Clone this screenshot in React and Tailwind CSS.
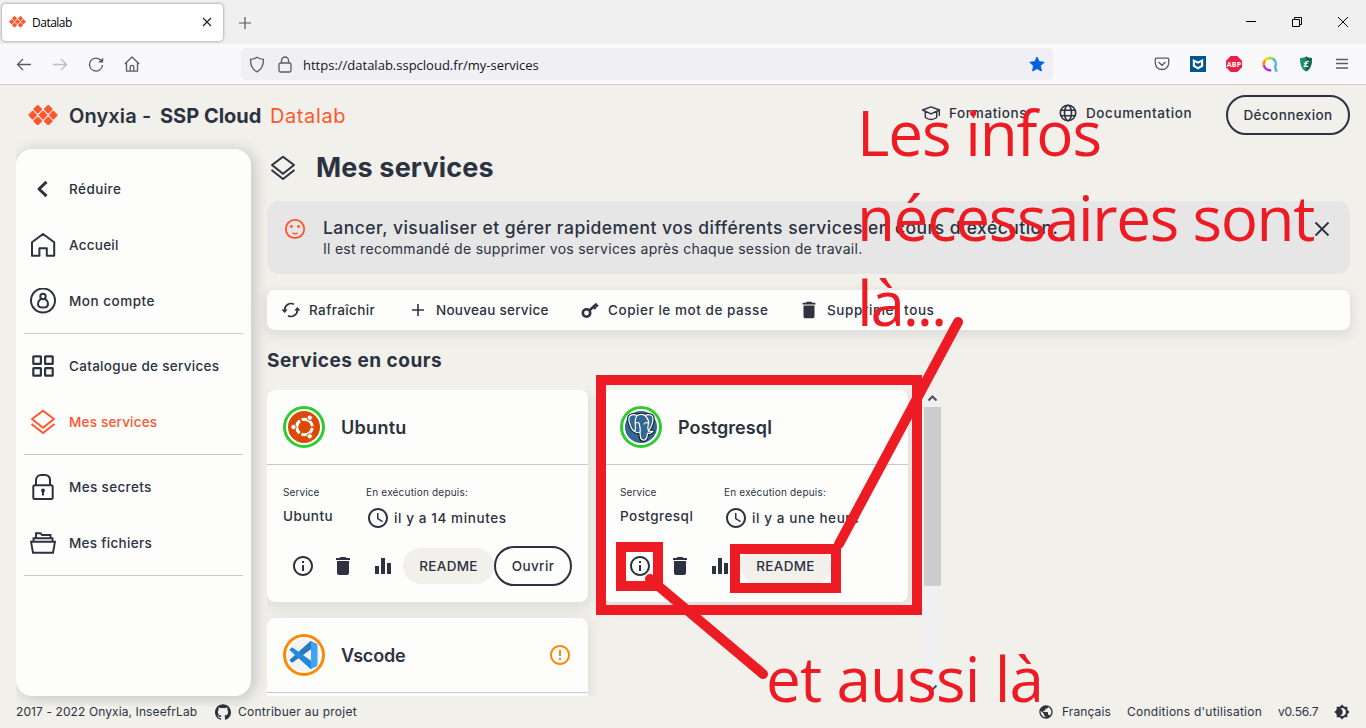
import React from 'react';
import {
  MdInfoOutline,
  MdDelete,
  MdEqualizer,
  MdAccessTime,
  MdErrorOutline,
  MdPublic,
  MdBrightness4,
} from 'react-icons/md';
import { SiGithub } from 'react-icons/si';

function OnyxiaLogo({ className }) {
  const tiles = [
    [9.6, 4.2], [20, 4.2],
    [4.6, 10], [14.8, 10], [25, 10],
    [9.6, 15.8], [20, 15.8],
  ];
  return (
    <svg viewBox="0 0 29.6 20" className={className} fill="#ff562c">
      {tiles.map(([x, y]) => (
        <rect key={`${x}-${y}`} x={x - 3.3} y={y - 3.3} width="6.6" height="6.6" rx="1" transform={`rotate(45 ${x} ${y})`} />
      ))}
    </svg>
  );
}

function LayersIcon({ className }) {
  return (
    <svg viewBox="0 0 26 26" className={className} fill="none" stroke="currentColor" strokeWidth="2" strokeLinejoin="round">
      <path d="M13 1.800 24 10 13 18.800 2 10Z" />
      <path d="m1.500 15 11.500 9L24.500 15" />
    </svg>
  );
}

function Line({ children, size = 26, width = 2, className = '' }) {
  return (
    <svg width={size} height={size} viewBox="0 0 26 26" fill="none" stroke="currentColor" strokeWidth={width} strokeLinejoin="round" className={className}>
      {children}
    </svg>
  );
}

const ChevronIcon = () => (
  <Line width={3} className="-translate-x-px"><path d="m17.500 5.800-7.500 7.200 7.500 7.200" /></Line>
);
const HomeIcon = () => (
  <Line><path d="M2 10.200 13 2l11.200 8.200v13.600h-7.400v-7.600H9.400v7.600H2Z" /></Line>
);
const AccountIcon = () => (
  <Line>
    <circle cx="13" cy="12.500" r="12" />
    <circle cx="13" cy="8.500" r="2.700" />
    <path d="M11 10.600C9.200 12.200 8 14 8 16c0 2.200 2 3.600 5 3.600s5-1.400 5-3.600c0-2-1.200-3.800-3-5.400" />
  </Line>
);
const CatalogIcon = () => (
  <Line width={2.2}>
    <rect x="3.300" y="3.300" width="7.600" height="7.600" rx="0.500" />
    <rect x="15.100" y="3.300" width="7.600" height="7.600" rx="0.500" />
    <rect x="3.300" y="15.100" width="7.600" height="7.600" rx="0.500" />
    <rect x="15.100" y="15.100" width="7.600" height="7.600" rx="0.500" />
  </Line>
);
const LockIcon = () => (
  <Line>
    <rect x="3.300" y="11.300" width="19.400" height="13.700" rx="1.500" />
    <path d="M6 11.500V6.500C6 3 8.500 1 11 1h4c3 0 5 2 5 5.500v5" />
    <circle cx="13" cy="16.500" r="1.200" fill="currentColor" strokeWidth="1.500" />
    <path d="M13 17v4.500" />
  </Line>
);
const FilesIcon = () => (
  <Line width={1.900}>
    <path d="M1 11.700h24l-2 11H3Z" strokeLinejoin="miter" />
    <path d="M3.500 11.500V8.300h19v3.200M6 8V3.200h4.500L12 5h8.500v3" strokeLinejoin="miter" />
  </Line>
);

const menu = [
  [
    { label: 'Réduire', icon: ChevronIcon, text: 'tracking-[0.45px]' },
    { label: 'Accueil', icon: HomeIcon, text: 'tracking-[0.250px]' },
    { label: 'Mon compte', icon: AccountIcon, text: 'tracking-[0.5px]' },
  ],
  [
    { label: 'Catalogue de services', icon: CatalogIcon, text: 'tracking-[0.3px]' },
    { label: 'Mes services', icon: () => <LayersIcon className="size-[26px]" />, text: 'tracking-[0.2px]', active: true },
  ],
  [
    { label: 'Mes secrets', icon: LockIcon, text: 'tracking-[0.35px]' },
    { label: 'Mes fichiers', icon: FilesIcon, text: 'tracking-[0.3px]' },
  ],
];

function Sidebar() {
  return (
    <nav className="w-[235px] shrink-0 [clip-path:inset(-12px_-16px_-10px_0)]">
      <div className="h-full rounded-2xl bg-[#fdfdfc] px-2 pt-3 shadow-[3px_2px_14px_1px_rgba(44,50,63,0.22)]">
        {menu.map((group, i) => (
          <div key={i}>
            {group.map(({ label, icon: Icon, text, active }) => (
              <div key={label} className={`flex h-14 items-center gap-[13px] pl-1.5 ${active ? 'text-[#ff562c]' : ''}`}>
                <Icon />
                <span className={`text-[13.5px] font-medium whitespace-nowrap ${text}`}>{label}</span>
              </div>
            ))}
            <div className="my-1 h-px bg-[#c9c9c8]" />
          </div>
        ))}
      </div>
    </nav>
  );
}

function BrowserChrome() {
  return (
    <div className="shrink-0 font-['Open_Sans',sans-serif]">
      <div className="flex h-11 items-center bg-[#f0f0f0]">
        <div className="ml-[2px] flex h-[37px] w-[221px] items-center rounded bg-white pl-[7px] shadow-[0_0_3px_rgba(0,0,0,0.5)]">
          <OnyxiaLogo className="mr-[6px] w-[17px]" />
          <span className="grow pt-0.5 text-[12px] tracking-[-0.5px] text-black">Datalab</span>
          <svg width="10" height="10" viewBox="0 0 10 10" stroke="#222" strokeWidth="1.200" className="mr-[11px]"><path d="m1 1 8 8M9 1 1 9" /></svg>
        </div>
        <svg width="12" height="12" viewBox="0 0 12 12" stroke="#55555f" strokeWidth="1.200" className="mt-px ml-4"><path d="M6 0v12M0 6h12" /></svg>
        <div className="ml-auto flex items-center gap-9 pr-[18px] text-black">
          <svg width="10" height="10" viewBox="0 0 10 10" stroke="currentColor"><path d="M0 4.500h10" /></svg>
          <svg width="10" height="10" viewBox="0 0 10 10" stroke="currentColor" fill="none"><path d="M.5 2.500h7v7h-7ZM2.500 2.500v-2h7v7h-2" /></svg>
          <svg width="10" height="10" viewBox="0 0 10 10" stroke="currentColor"><path d="m0 0 10 10M10 0 0 10" /></svg>
        </div>
      </div>
      <div className="flex h-[41px] items-center border-b border-[#cccccf] bg-[#f9f9fb] pl-4 text-[#5b5b66]">
        <svg width="16" height="16" viewBox="0 0 16 16" fill="none" stroke="currentColor" strokeWidth="1.300"><path d="M15 8.500H1.500M7 3 1.500 8.500 7 14" /></svg>
        <svg width="16" height="16" viewBox="0 0 16 16" fill="none" stroke="#bcbcc1" strokeWidth="1.300" className="ml-5"><path d="M1 8.500h13.500M9 3 14.500 8.500 9 14" /></svg>
        <svg width="16" height="16" viewBox="0 0 16 16" fill="none" stroke="currentColor" strokeWidth="1.300" className="ml-5"><path d="M13.300 4.800a6.500 6.500 0 1 0 1.200 4.200" /><path d="M15.200 1.500v5H10Z" fill="currentColor" stroke="none" /></svg>
        <svg width="16" height="16" viewBox="0 0 16 16" fill="none" stroke="currentColor" strokeWidth="1.300" strokeLinejoin="round" className="ml-5"><path d="M.8 8 8 1l7.200 7M2.500 6.500v8.700h11V6.500M6.200 15v-3.800a1.800 1.800 0 0 1 3.600 0V15" /></svg>
        <div className="ml-[101px] flex h-8 w-[812px] items-center rounded bg-[#f0f0f4] pl-2">
          <svg width="16" height="17" viewBox="0 0 16 17" fill="none" stroke="currentColor" strokeWidth="1.300"><path d="M8 1.200c2 1.400 4 2 6.500 2.200C14.500 9 12.500 13.500 8 15.800 3.500 13.500 1.500 9 1.500 3.400 4 3.200 6 2.600 8 1.200Z" /></svg>
          <svg width="14" height="17" viewBox="0 0 14 17" fill="none" stroke="currentColor" strokeWidth="1.300" className="ml-[13px]"><rect x="1" y="7" width="12" height="9" rx="1.500" /><path d="M3.500 7V4.500a3.500 3.500 0 0 1 7 0V7" /></svg>
          <span className="ml-[11px] grow pt-[3px] text-[13px] text-[#15141a]">https://datalab.sspcloud.fr/my-services</span>
          <svg width="16" height="16" viewBox="0 0 16 16" fill="#0061e0" className="mr-2"><path stroke="#0061e0" strokeLinejoin="round" d="m8 1 2.100 4.700 5.100.600-3.800 3.500 1 5.200L8 12.500 3.600 15l1-5.200L.8 6.300l5.100-.6Z" /></svg>
        </div>
        <div className="ml-auto flex items-center gap-5 pr-4">
          <svg width="16" height="16" viewBox="0 0 16 16" fill="none" stroke="currentColor" strokeWidth="1.300"><path d="M2.300 2.200h11.400c.7 0 1 .4 1 1V7c0 4-3 6.500-6.700 6.500S1.300 11 1.300 7V3.200c0-.6.300-1 1-1ZM4.500 6 8 9.300 11.500 6" /></svg>
          <svg width="16" height="16" viewBox="0 0 16 16"><path fill="#01568f" d="M0 0h16v16H0Z" /><path fill="#fff" d="m2.800 3 5.200 2.500L13.200 3v7.500L8 13.500l-5.200-3Z" /><path fill="#01568f" d="m5 6.200 3 1.500 3-1.500v3L8 11 5 9.200Z" /></svg>
          <svg width="16" height="16" viewBox="0 0 16 16"><path fill="#ed1e45" d="M4.700 0h6.600L16 4.700v6.600L11.300 16H4.700L0 11.300V4.700Z" /><text x="8" y="10.800" textAnchor="middle" fontSize="7.200" fontWeight="700" fill="#fff">ABP</text></svg>
          <svg width="16" height="17" viewBox="0 0 16.500 17" fill="none" strokeWidth="2.500"><path d="M2 10a6.300 6.300 0 0 1 1.500-6" stroke="#ff8a00" /><path d="M3 4.500A6.300 6.300 0 0 1 8 1.800" stroke="#fbd500" /><path d="M7 1.900a6.300 6.300 0 0 1 5.500 1.600" stroke="#8ee04a" /><path d="M11.500 2.800A6.300 6.300 0 0 1 13.500 11l1.500 5" stroke="#44b4f5" /><path d="M2 9.500a6.300 6.300 0 0 0 7.500 4.800" stroke="#b32ee0" /></svg>
          <svg width="16" height="16" viewBox="0 0 16 16"><path fill="#1f8f74" d="M8 .5c2 1 4 1.500 6 1.500 0 6-1 11-6 13.500C3 13 2 8 2 2c2 0 4-.5 6-1.500Z" /><path fill="#12684f" d="M8 .5c2 1 4 1.500 6 1.500 0 6-1 11-6 13.500Z" /><text x="8" y="11" textAnchor="middle" fontSize="9" fontWeight="700" fontStyle="italic" fill="#fff">£</text></svg>
          <svg width="16" height="16" viewBox="0 0 16 16" stroke="currentColor" strokeWidth="1.300"><path d="M2 3.500h12M2 7.500h12M2 12h12" /></svg>
        </div>
      </div>
    </div>
  );
}

function Header() {
  return (
    <header className="flex h-16 shrink-0 items-center pr-4 pb-1 pl-7">
      <OnyxiaLogo className="w-[30px]" />
      <div className="ml-[11px] flex pt-px text-[20px] whitespace-nowrap">
        <span className="w-[91px] font-semibold tracking-[0.1px]">Onyxia -</span>
        <span className="w-[110px] font-bold">SSP Cloud</span>
        <span className="tracking-[0.6px] text-[#ff562c]">Datalab</span>
      </div>
      <div className="ml-auto flex items-center text-[13.5px] font-medium whitespace-nowrap">
        <svg width="20" height="18" viewBox="0 0 20 18" fill="none" stroke="currentColor" strokeWidth="1.400" strokeLinejoin="round" className="-mt-1 mr-[7px] -translate-x-px"><path d="M1.500 6 10 2.800 18.500 6 10 9.800ZM4.300 7.500v6q5.700 4 11.400 0v-6M18.300 6v6" /></svg>
        <span className="-mt-1 w-[110px] tracking-[0.6px]">Formations</span>
        <svg width="18" height="18" viewBox="0 0 18 18" fill="none" stroke="currentColor" strokeWidth="1.600" className="-mt-1 mr-[9px]"><circle cx="9" cy="9" r="7.700" /><ellipse cx="9" cy="9" rx="3.500" ry="7.700" /><path d="M2 6.200h14M2 11.800h14" /></svg>
        <span className="-mt-1 w-[140px] tracking-[0.6px]">Documentation</span>
        <button className="h-10 w-[124px] rounded-full border-2 border-[#2c323f] text-[13.500px] font-medium tracking-[0.4px]">Déconnexion</button>
      </div>
    </header>
  );
}

const RefreshIcon = () => (
  <svg width="24" height="24" viewBox="0 0 24 24" fill="none" stroke="currentColor" strokeWidth="1.700" className="shrink-0">
    <path d="M5.600 12A6.400 6.400 0 0 1 15 6.300M18.400 12A6.400 6.400 0 0 1 9 17.700" />
    <path d="M2.500 11.500h6.200l-3.100 3.500ZM21.500 12.500h-6.200L18.400 9Z" fill="currentColor" stroke="none" />
  </svg>
);
const PlusIcon = () => (
  <svg width="24" height="24" viewBox="0 0 24 24" stroke="currentColor" strokeWidth="1.600" className="shrink-0"><path d="M12 6v12M6 12h12" /></svg>
);
const KeyIcon = () => (
  <svg width="24" height="24" viewBox="0 0 24 24" fill="none" stroke="currentColor" strokeWidth="2.600" className="shrink-0"><circle cx="8.500" cy="15" r="3.700" /><path d="m11.300 12.500 7.500-6.700M15.500 8.500l2.200 2.300M17.800 6.500l2 2.200" /></svg>
);

const actions = [
  { label: 'Rafraîchir', icon: RefreshIcon, width: 'w-[97px]', text: 'tracking-[0.4px]' },
  { label: 'Nouveau service', icon: PlusIcon, width: 'w-[142px]', text: 'tracking-[0.250px]' },
  { label: 'Copier le mot de passe', icon: KeyIcon, width: 'w-[189px]', text: 'tracking-[0.55px]' },
  { label: 'Supprimer tous', icon: () => <MdDelete size={22} className="mx-px shrink-0" />, width: 'w-[138px]', text: 'tracking-[0.6px]' },
];

function UbuntuLogo() {
  return (
    <svg viewBox="0 0 32 32" className="size-8" fill="none">
      <circle cx="16" cy="16" r="16" fill="#d94a05" />
      <circle cx="16.500" cy="16" r="7.800" stroke="#fff" strokeWidth="3" strokeDasharray="14.340 2" strokeDashoffset="-1" />
      {[[5.500, 16], [21.700, 6.700], [21.700, 25.300]].map(([x, y]) => (
        <circle key={`${x}${y}`} cx={x} cy={y} r="2.700" fill="#fff" stroke="#d94a05" strokeWidth="1" />
      ))}
    </svg>
  );
}

const elephant =
  'M10 20C7 21 3.500 11 3.800 7.500 4 3.500 9 3 12 4.500c3-1.300 6-1.300 8 0 4-1.800 8-.5 8 3 0 4-2 9-4.500 12.500 1.500.7 3 .5 4.500.2-1 2-4 2.500-5.500 2-.5 3 0 7-4 7-3 0-3.500-3-3.500-8-1 .5-3.500.7-4.500-.2';

function PostgresLogo() {
  return (
    <div className="flex size-8 items-center justify-center rounded-full bg-[#336791]">
      <svg viewBox="0 0 32 32" className="size-8" fill="none" stroke="#fff" strokeWidth="1.200" strokeLinejoin="round" strokeLinecap="round">
        <path d={elephant} stroke="#10202c" strokeWidth="3.400" />
        <path d={elephant} fill="#336791" />
        <path d="M12 4.500c-2 3-2 8-1.500 11 .3 2 .2 3-1 4.500M10.500 12c2-1 4-.5 4 1.500 0 3 1.500 4 .5 7.500M20 4.500c3 3 4.500 7 3 10.500-.5 1.500-.3 3 .5 5M22.800 12c-2-.8-3.500-.3-3.500 1" />
      </svg>
    </div>
  );
}

function VscodeLogo() {
  return (
    <svg viewBox="0 0 32 32" className="size-8">
      <circle cx="16" cy="16" r="16" fill="#f3f3f3" />
      <path fill="#2b78bd" d="M2 20.500 22.500 2 24 3v6.500L5 23.300q-.8.600-1.500 0l-1.500-1.300q-.6-.7 0-1.500Z" />
      <path fill="#2489d8" d="M2 11.500 22.500 30l1.500-1v-6.500L5 8.700q-.8-.6-1.500 0L2 10q-.6.700 0 1.500Z" />
      <path fill="#3fa4f3" d="m22.500 1.700 6 2.800q1 .6 1 1.700v19.600q0 1.100-1 1.700l-6 2.800q-.6.200-1-.2c.8.600 1.500.1 1.500-1V2.900c0-1.100-.7-1.600-1.500-1q.4-.5 1-.2Z" />
    </svg>
  );
}

function Card({ name, logo, ring, warning, size, since, nameWidth, titleText, open }) {
  return (
    <article className={`flex flex-col rounded-t-lg bg-[#fdfdfc] shadow-[0_4px_12px_2px_rgba(44,50,63,0.10)] ${size}`}>
      <div className="flex h-[75px] shrink-0 items-center border-b border-[#c9c9c8] px-4">
        <div className={`flex size-[42px] items-center justify-center rounded-full border-[3px] bg-white ${ring}`}>{logo}</div>
        <h3 className={`ml-4 grow text-[18px] font-semibold ${titleText}`}>{name}</h3>
        {warning && <MdErrorOutline size={24} className="text-[#ff8800]" />}
      </div>
      {since && (
        <>
          <div className="flex h-[81px] gap-8 px-4 pt-5 whitespace-nowrap">
            <div className={nameWidth}>
              <div className="text-[10px] leading-[14px] tracking-[0.1px]">Service</div>
              <div className="mt-2 text-[13.500px] leading-[18px] font-medium tracking-[0.45px]">{name}</div>
            </div>
            <div>
              <div className="text-[10px] leading-[14px] tracking-[0.2px]">En exécution depuis:</div>
              <div className="mt-[7px] flex items-center gap-1 text-[13.500px] font-medium tracking-[0.6px]">
                <MdAccessTime size={24} />
                <span>{since}</span>
              </div>
            </div>
          </div>
          <div className="flex h-10 items-center px-4">
            <span className="flex w-10 justify-center"><MdInfoOutline size={24} /></span>
            <span className="flex w-10 justify-center"><MdDelete size={24} /></span>
            <span className="flex w-10 justify-center"><MdEqualizer size={24} /></span>
            <button className="h-9 w-[91px] rounded-full bg-[#f1f0eb] text-[13.500px] font-medium tracking-[0.3px]">README</button>
            {open && <button className="h-10 w-[78px] rounded-full border-2 border-[#2c323f] text-[13.500px] font-medium tracking-[0.4px]">Ouvrir</button>}
          </div>
        </>
      )}
    </article>
  );
}

function Main() {
  return (
    <main className="flex min-w-0 grow flex-col">
      <div className="flex h-[38px] items-center pl-[3px]">
        <LayersIcon className="size-[26px]" />
        <h1 className="ml-5 text-[27px] font-bold tracking-[0.15px]">Mes services</h1>
      </div>
      <div className="mt-[14px] flex h-[73px] rounded-xl bg-[#e6e6e6] pr-5 pl-4">
        <svg width="24" height="24" viewBox="0 0 24 24" fill="none" stroke="#ff562c" strokeWidth="1.800" className="mt-4"><circle cx="12" cy="12" r="9.200" /><path d="M9.500 16q2.500 1.300 5 0" strokeWidth="1.500" /><circle cx="8.500" cy="9.500" r="1.400" fill="#ff562c" stroke="none" /><circle cx="15.500" cy="9.500" r="1.400" fill="#ff562c" stroke="none" /></svg>
        <div className="mt-[15px] ml-4 grow whitespace-nowrap">
          <div className="text-[17.500px] leading-6 font-medium tracking-[0.47px]">Lancer, visualiser et gérer rapidement vos différents services en cours d'exécution.</div>
          <div className="text-[14px] leading-[18px] tracking-[0.28px]">Il est recommandé de supprimer vos services après chaque session de travail.</div>
        </div>
        <svg width="16" height="16" viewBox="0 0 16 16" stroke="currentColor" strokeWidth="1.800" className="mt-5"><path d="m1.500 1.500 13 13M14.500 1.500l-13 13" /></svg>
      </div>
      <div className="mt-4 flex h-10 items-center gap-[30px] rounded-lg bg-[#fdfdfc] pl-3 text-[13.500px] font-medium shadow-[0_4px_12px_2px_rgba(44,50,63,0.10)]">
        {actions.map(({ label, icon: Icon, width, text }) => (
          <div key={label} className={`flex items-center gap-1.5 whitespace-nowrap ${width}`}>
            <Icon />
            <span className={text}>{label}</span>
          </div>
        ))}
      </div>
      <h2 className="h-[60px] text-[19px] leading-[62px] font-bold tracking-[0.5px]">Services en cours</h2>
      <div className="flex h-[306px] w-[674px]">
        <div className="flex w-[657px] flex-wrap content-start gap-4 overflow-hidden">
          <Card name="Ubuntu" logo={<UbuntuLogo />} ring="border-[#2ecc31]" size="h-[212px] w-[321px] rounded-b-lg" nameWidth="w-[51px]" since="il y a 14 minutes" titleText="tracking-[0.3px]" open />
          <Card name="Postgresql" logo={<PostgresLogo />} ring="border-[#2ecc31]" size="h-[212px] w-[304px] rounded-b-lg" nameWidth="w-[72px]" since="il y a une heure" titleText="tracking-[0.1px]" />
          <Card name="Vscode" logo={<VscodeLogo />} ring="border-[#ff8800]" size="h-[78px] w-[321px]" titleText="tracking-[-0.150px] pt-px" warning />
        </div>
        <div className="flex w-[17px] flex-col items-center bg-[#f0f0f0] text-[#505050]">
          <svg width="17" height="17" viewBox="0 0 17 17" fill="none" stroke="currentColor" strokeWidth="2"><path d="m4.500 10.500 4-4 4 4" /></svg>
          <div className="h-[179px] w-full bg-[#cdcdcd]" />
          <svg width="17" height="17" viewBox="0 0 17 17" fill="none" stroke="currentColor" strokeWidth="2" className="mt-auto"><path d="m4.500 6.500 4 4 4-4" /></svg>
        </div>
      </div>
    </main>
  );
}

function Footer() {
  return (
    <footer className="flex h-8 shrink-0 items-center px-4 text-[12px] whitespace-nowrap">
      <span className="w-[199px] tracking-[0.1px]">2017 - 2022 Onyxia, InseefrLab</span>
      <SiGithub size={16} />
      <span className="ml-[7px] tracking-[0.250px]">Contribuer au projet</span>
      <div className="ml-auto flex items-center">
        <MdPublic size={16} />
        <span className="ml-2 w-[65px] tracking-[0.1px]">Français</span>
        <span className="w-[151px] tracking-[0.250px]">Conditions d'utilisation</span>
        <span className="w-[56px] tracking-[-0.2px]">v0.56.7</span>
        <MdBrightness4 size={16} />
      </div>
    </footer>
  );
}

function Annotations() {
  return (
    <div className="pointer-events-none absolute inset-0 font-['Open_Sans',sans-serif] text-[62px] leading-[85px] whitespace-nowrap text-[#ed1c24]">
      <div className="absolute top-[375px] left-[596px] h-[240px] w-[326px] border-[10px] border-[#ed1c24]" />
      <div className="absolute top-[542px] left-[616px] h-[49px] w-[47px] border-[10px] border-[#ed1c24]" />
      <div className="absolute top-[544px] left-[730px] h-[49px] w-[111px] border-[10px] border-[#ed1c24]" />
      <svg className="absolute inset-0" width="1366" height="728" stroke="#ed1c24" strokeWidth="10" strokeLinecap="round">
        <path d="M958 322 839 544M650 579l113 95" />
      </svg>
      <div className="absolute top-[90px] left-[857px]">
        <div className="tracking-[-1.150px]">Les infos</div>
        <div className="tracking-[-1.400px]">nécessaires sont</div>
        <div className="tracking-[-2.200px]">là...</div>
      </div>
      <div className="absolute top-[636px] left-[766px] tracking-[-0.850px]">et aussi là</div>
    </div>
  );
}

export default function App() {
  return (
    <div className="relative flex h-[728px] w-[1366px] flex-col overflow-hidden bg-[#f1f0eb] font-['Inter',sans-serif] text-[#2c323f]">
      <BrowserChrome />
      <Header />
      <div className="flex h-[547px] shrink-0 gap-4 px-4">
        <Sidebar />
        <Main />
      </div>
      <Footer />
      <Annotations />
    </div>
  );
}
